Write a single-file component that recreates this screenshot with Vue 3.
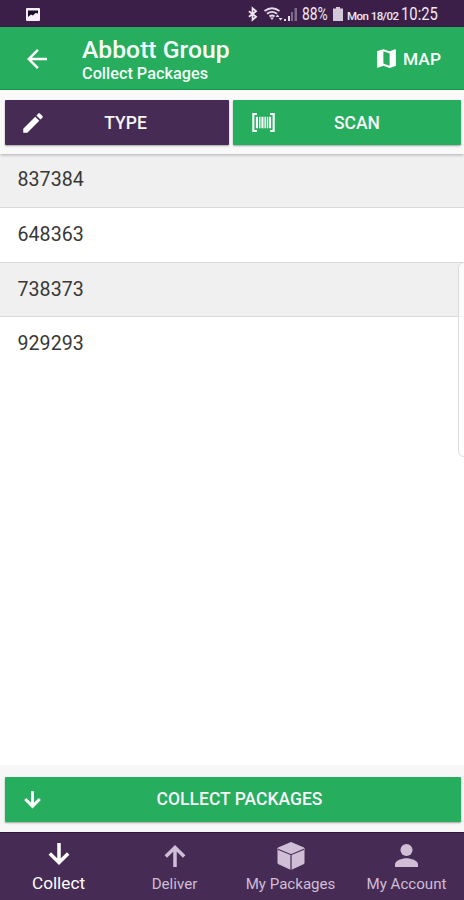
<script setup>
const packages = ['837384', '648363', '738373', '929293']
const tabs = [
  { label: 'Collect', icon: 'down', active: true },
  { label: 'Deliver', icon: 'up' },
  { label: 'My Packages', icon: 'box' },
  { label: 'My Account', icon: 'person' },
]
</script>

<template>
  <div class="screen">
    <div class="status">
      <svg class="picture" viewBox="0 0 14 13"><rect width="14" height="13" rx="1" fill="#f6eef8" /><path d="M2 2.500h10v3L9.500 5 7 7.500 5 6.500 2 9z" fill="#1d0a28" /></svg>
      <div class="status-right">
        <svg class="bt" viewBox="0 0 10 14"><path d="M1 4l8 6-4 3.500v-13L9 4l-8 6" fill="none" stroke="#eee5f1" stroke-width="1.900" /></svg>
        <svg class="wifi" viewBox="0 0 19 14"><g fill="none" stroke="#e3d9e7" stroke-width="1.900"><path d="M.5 4Q8 -1.500 15.500 4M3 6.800Q8 3 13 6.800M5.500 9.500Q8 7.300 10.500 9.500" /></g><path d="M6 10.500L8 13l2-2.500zM11.500 10l2-2.500 2 2.500zM14.500 11h4l-2 2.500z" fill="#e3d9e7" /></svg>
        <svg class="signal" viewBox="0 0 14 13"><path d="M0 11h2v2H0zM4 8h2v5H4z" fill="#e3d9e7" /><path d="M7 4h2v9H7zM10.500 0h2.500v13h-2.500z" fill="#806c89" /></svg>
        <span class="pct"><b>88%</b></span>
        <svg class="battery" viewBox="0 0 10 14"><path d="M3 0h4v1.500h3V14H0V1.500h3z" fill="#d3c8d8" /></svg>
        <span class="date">Mon 18/02</span>
        <span class="time"><b>10:25</b></span>
      </div>
    </div>

    <header class="header">
      <svg class="back" viewBox="0 0 24 24"><path d="M20 11H7.830l5.590-5.590L12 4l-8 8 8 8 1.410-1.410L7.830 13H20v-2z" /></svg>
      <div class="titles">
        <h1>Abbott Group</h1>
        <p>Collect Packages</p>
      </div>
      <div class="map">
        <svg viewBox="0 0 24 24"><path d="M20.500 3l-.16.030L15 5.100 9 3 3.360 4.900c-.21.070-.36.250-.36.480V20.500c0 .280.220.500.500.500l.16-.030L9 18.900l6 2.100 5.640-1.900c.21-.070.360-.250.360-.480V3.500c0-.280-.220-.500-.500-.500zM15 19l-6-2.110V5l6 2.110V19z" /></svg>
        <span>MAP</span>
      </div>
    </header>

    <div class="actions">
      <button class="btn type">
        <svg class="pencil" viewBox="0 0 24 24"><path d="M3 17.250V21h3.750L17.810 9.940l-3.750-3.750L3 17.250zM20.710 7.040c.390-.390.390-1.020 0-1.410l-2.340-2.340c-.390-.390-1.020-.390-1.410 0l-1.830 1.830 3.750 3.750 1.830-1.830z" /></svg>
        <span>TYPE</span>
      </button>
      <button class="btn scan">
        <svg class="barcode" viewBox="0 0 24 20"><path d="M5 1.100H1.300v17.800H5M19 1.100h3.700v17.800H19" fill="none" stroke="#fff" stroke-width="2.200" /><path d="M4 4h2.200v12H4zM7.300 4h1.500v12H7.300zM9.800 4h2.200v12H9.800zM13 4h1.500v12H13zM15.500 4h1.500v12h-1.500zM18 4h2v12h-2z" /></svg>
        <span>SCAN</span>
      </button>
    </div>

    <main class="content">
      <ul class="list">
        <li v-for="p in packages" :key="p">{{ p }}</li>
      </ul>
      <div class="edge"></div>
    </main>

    <div class="submit">
      <button class="btn collect">
        <svg class="down" viewBox="0 0 24 24"><path d="M12 4v14M5 11.500l7 7 7-7" fill="none" stroke="#fff" stroke-width="2.900" /></svg>
        <span>COLLECT PACKAGES</span>
      </button>
    </div>

    <nav class="tabs">
      <div v-for="t in tabs" :key="t.label" class="tab" :class="{ active: t.active }">
        <div class="tab-icon">
          <svg v-if="t.icon === 'down'" class="arrow down-tab" viewBox="0 0 22 22"><path d="M11 0v19M1.800 10.500l9.200 9 9.200-9" fill="none" stroke="currentColor" stroke-width="3.500" /></svg>
          <svg v-else-if="t.icon === 'up'" class="arrow" viewBox="0 0 22 22"><path d="M11 22V3M1.800 11.500l9.200-9 9.200 9" fill="none" stroke="currentColor" stroke-width="3.500" /></svg>
          <svg v-else-if="t.icon === 'box'" class="box" viewBox="0 0 28 28"><path d="M14 .5L27 6v15.500L14 27.500 1 21.500V6z" fill="currentColor" stroke="currentColor" stroke-linejoin="round" /><path d="M1 7.300l13 5.400 13-5.400M14 12.700V28" fill="none" stroke="#462c55" stroke-width="1.200" /></svg>
          <svg v-else class="person" viewBox="0 0 24 24"><circle cx="12" cy="6.200" r="6.300" fill="currentColor" /><path d="M0 24v-2.800c0-4.200 7.500-6.400 12-6.400s12 2.200 12 6.400V24z" fill="currentColor" /></svg>
        </div>
        <span>{{ t.label }}</span>
      </div>
    </nav>
  </div>
</template>

<style>
body { margin: 0; background: #fff; }
</style>

<style scoped>
.screen { width: 464px; height: 900px; display: flex; flex-direction: column; overflow: hidden; background: #fff; font-family: Roboto, sans-serif; }
svg { display: block; flex: none; fill: #fff; overflow: visible; }
span { white-space: nowrap; }
.status { height: 27px; flex: none; box-sizing: border-box; background: #3b1f49; display: flex; justify-content: space-between; align-items: center; padding: 1px 26px 0 26px; color: #f0e8f3; }
.picture { width: 14px; height: 13px; }
.status-right { display: flex; align-items: center; }
.bt { width: 9px; height: 14px; margin-right: 7px; }
.wifi { width: 19px; height: 14px; margin-right: 1px; }
.signal { width: 14px; height: 13px; margin-right: 4px; }
.pct b, .time b { display: block; font-weight: 400; transform-origin: left center; }
.pct { font-size: 17.5px; width: 27px; }
.pct b { transform: scaleX(.79); }
.battery { width: 10px; height: 14px; margin: 0 4px 0 4px; }
.date { font-size: 11.5px; width: 50px; font-weight: 500; letter-spacing: -.55px; padding-top: 4px; }
.time { font-size: 18.5px; width: 37px; margin-left: 4px; }
.time b { transform: scaleX(.8); }
.header { height: 63px; flex: none; box-sizing: border-box; background: #26ad5e; border-bottom: 1px solid #1ba253; display: flex; align-items: center; padding: 0 23px 0 22px; color: #f5fff8; }
.back { width: 30px; height: 30px; margin-top: 1px; }
.titles { margin-left: 30px; flex: 1; padding-top: 4px; }
h1 { margin: 0; font-size: 24.7px; line-height: 28px; font-weight: 500; }
p { margin: 0; font-size: 16.3px; line-height: 20px; font-weight: 500; }
.map { display: flex; align-items: center; gap: 4.5px; font-size: 17.4px; font-weight: 500; padding-top: 1px; }
.map svg { width: 25px; height: 25px; }
.actions { height: 64px; flex: none; box-sizing: border-box; background: #f9f9f9; padding: 10px 3px 0 5px; display: grid; grid-template-columns: 224px 228px; gap: 4px; align-items: start; position: relative; z-index: 1; box-shadow: 0 1px 3px rgba(0,0,0,.28); }
.btn { height: 45px; border: 0; border-radius: 1px; padding: 0; font-family: inherit; font-size: 17.5px; font-weight: 500; color: #f7f4f8; display: grid; align-items: center; box-shadow: 0 1px 2px rgba(0,0,0,.35); }
.btn > svg, .btn > span { grid-area: 1 / 1; }
.btn > span { justify-self: center; }
.btn > svg { justify-self: start; }
.type { background: #462c55; }
.scan, .collect { background: #26ad5e; }
.type > span { padding-left: 17px; }
.scan > span { padding-left: 20px; }
.pencil { width: 26px; height: 26px; margin-left: 15px; }
.barcode { width: 23px; height: 19px; margin-left: 19px; }
.content { flex: 1; position: relative; }
.list { margin: 0; padding: 0; list-style: none; }
li { height: 54.6px; box-sizing: border-box; padding: 0 17.5px; display: flex; align-items: center; font-size: 19.6px; letter-spacing: .05px; color: #383838; border-bottom: 1px solid #d9d9d9; }
li:first-child { height: 54px; padding-bottom: 3px; }
li:nth-child(odd) { background: #f0f0f0; }
li:last-child { border-bottom: 0; padding-bottom: 1px; }
.edge { position: absolute; right: -6px; top: 108px; width: 10px; height: 193px; border: 1px solid #dcdcdc; border-radius: 6px; background: rgba(255,255,255,.75); }
.submit { height: 67px; flex: none; box-sizing: border-box; background: #f7f7f7; padding: 12px 3px 0 5px; }
.collect { width: 456px; }
.collect > span { padding-left: 13px; padding-bottom: 1px; }
.down { width: 25px; height: 25px; margin-left: 14.5px; }
.tabs { height: 68px; flex: none; box-sizing: border-box; border-top: 1px solid #2f163c; background: #462c55; display: grid; grid-template-columns: repeat(4, 116px); padding-left: .5px; color: #d0bdd6; }
.tab { display: flex; flex-direction: column; align-items: center; font-size: 15.1px; }
.tab-icon { height: 41px; display: flex; align-items: center; padding-top: 4px; box-sizing: border-box; }
.tab span { line-height: 20px; }
.arrow { width: 22px; height: 22px; }
.down-tab { margin-top: -3px; }
.box { width: 28px; height: 28px; }
.person { width: 23px; height: 23px; }
.tab.active { color: #fff; font-size: 17.2px; }
.tab.active span { line-height: 18px; }
</style>
